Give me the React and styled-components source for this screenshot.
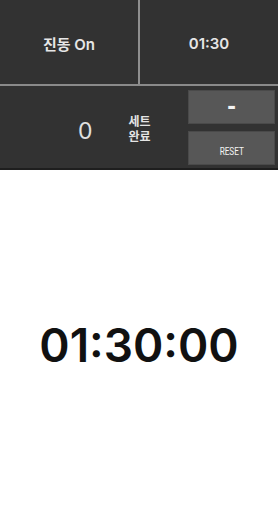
import React from "react";
import styled, { createGlobalStyle } from "styled-components";

const Global = createGlobalStyle`
  html, body {
    margin: 0;
    padding: 0;
    background: #ffffff;
  }
  body {
    font-family: "Noto Sans CJK KR", "Noto Sans", sans-serif;
  }
`;

const Page = styled.div`
  width: 278px;
  height: 512px;
  display: flex;
  flex-direction: column;
  background: #ffffff;
`;

const Header = styled.div`
  background: #323232;
  border-bottom: 2px solid #1e1e1e;
`;

const TopRow = styled.div`
  display: grid;
  grid-template-columns: 138px 2px 1fr;
  height: 84px;
  border-bottom: 2px solid #8a8a8a;
`;

const Divider = styled.div`
  background: #8f8f8f;
`;

const TopCell = styled.div`
  display: flex;
  align-items: center;
  justify-content: center;
  color: #e6e6e6;
  font-size: 15px;
  font-weight: 600;
  font-family: Inter, "Noto Sans CJK KR", sans-serif;
  padding-top: 2px;
`;

const BottomRow = styled.div`
  display: flex;
  height: 82px;
  padding: 4px 3px 0 0;
  box-sizing: border-box;
`;

const Counter = styled.div`
  flex: 1;
  display: flex;
  align-items: center;
  padding-left: 78px;
  gap: 36px;
`;

const Count = styled.div`
  color: #e0e0e0;
  font-size: 23px;
  font-family: Inter, sans-serif;
  margin-top: 3px;
`;

const Label = styled.div`
  color: #e4e4e4;
  font-size: 12px;
  font-weight: 700;
  line-height: 15px;
  width: 26px;
  margin-top: -3px;
`;

const Buttons = styled.div`
  width: 87px;
  display: flex;
  flex-direction: column;
  gap: 7px;
`;

const Button = styled.div`
  height: 34px;
  background: #575757;
  border: 1px solid #4a4a4a;
  box-sizing: border-box;
  display: flex;
  align-items: center;
  justify-content: center;
  color: #f4f4f4;
  padding-top: ${(p) => p.$pt || 0}px;
`;

const Minus = styled.span`
  font-family: "Liberation Sans", sans-serif;
  font-size: 26px;
  font-weight: 700;
  line-height: 1;
  margin-top: -4px;
`;

const ResetText = styled.span`
  font-family: Roboto, sans-serif;
  font-size: 10px;
  display: inline-block;
  transform: scaleX(0.82);
`;

const Body = styled.div`
  flex: 1;
  display: flex;
  align-items: center;
  justify-content: center;
  padding-top: 7px;
`;

const Clock = styled.div`
  font-family: Inter, sans-serif;
  font-size: 46px;
  font-weight: 600;
  color: #111111;
`;

export default function App() {
  return (
    <Page>
      <Global />
      <Header>
        <TopRow>
          <TopCell>진동 On</TopCell>
          <Divider />
          <TopCell>01:30</TopCell>
        </TopRow>
        <BottomRow>
          <Counter>
            <Count>0</Count>
            <Label>세트 완료</Label>
          </Counter>
          <Buttons>
            <Button>
              <Minus>-</Minus>
            </Button>
            <Button $pt={6}>
              <ResetText>RESET</ResetText>
            </Button>
          </Buttons>
        </BottomRow>
      </Header>
      <Body>
        <Clock>01:30:00</Clock>
      </Body>
    </Page>
  );
}
